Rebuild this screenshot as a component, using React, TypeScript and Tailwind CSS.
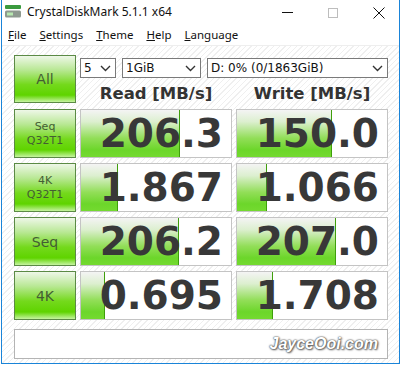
import React from "react";

const rows = [
  { l1: "Seq", l2: "Q32T1", r: "206.3", w: "150.0", rb: 100, wb: 96 },
  { l1: "4K", l2: "Q32T1", r: "1.867", w: "1.066", rb: 38, wb: 31 },
  { l1: "Seq", l2: "", r: "206.2", w: "207.0", rb: 99, wb: 100 },
  { l1: "4K", l2: "", r: "0.695", w: "1.708", rb: 25, wb: 37 },
];

function Chevron() {
  return (
    <svg width="11" height="7" viewBox="0 0 11 7" className="shrink-0">
      <path d="M1 1 L5.5 5.5 L10 1" fill="none" stroke="#333" strokeWidth="1.4" />
    </svg>
  );
}

function Select({ w, text }: { w: string; text: string }) {
  return (
    <div
      className={`${w} h-[20px] border border-[#7a7a7a] bg-white flex items-center justify-between pl-[3px] pr-[4px] text-[12px] text-[#111] [font-family:'DejaVu_Sans',sans-serif]`}
    >
      <span>{text}</span>
      <Chevron />
    </div>
  );
}

function Label({ l1, l2, h }: { l1: string; l2: string; h: string }) {
  return (
    <div
      className={`${h} border border-[#5b8a45] bg-[linear-gradient(180deg,#eef7e8_0%,#b9e895_30%,#74d91c_62%,#5fd400_85%,#c6f4a0_100%)] flex flex-col items-center justify-center text-[#435e33] [font-family:'DejaVu_Sans',sans-serif]`}
    >
      {l2 ? (
        <>
          <div className="text-[11px] leading-[14px]">{l1}</div>
          <div className="text-[11px] leading-[14px]">{l2}</div>
        </>
      ) : (
        <div className="text-[14px] leading-[16px]">{l1}</div>
      )}
    </div>
  );
}

function Value({ v, bar }: { v: string; bar: number }) {
  return (
    <div className="relative h-[49px] border border-[#c4c4c4] bg-white overflow-hidden">
      <div
        className="absolute left-0 top-0 bottom-0 border-r border-[#3f9e0c] bg-[linear-gradient(180deg,#f4f4f4_0%,#dcefcf_25%,#92de58_60%,#6cd62a_85%,#74da30_100%)]"
        style={{ width: bar - 1 }}
      />
      <div className="relative h-full flex items-center justify-end pr-[8px] text-[39px] font-bold leading-none text-[#383838] [font-family:'DejaVu_Sans',sans-serif]">
        {v}
      </div>
    </div>
  );
}

export default function App() {
  return (
    <div className="w-[402px] h-[367px] bg-white overflow-hidden">
      <div className="ml-[1px] w-[399px] h-[364px] border-l border-r border-b border-[#1a84d8] flex flex-col">
        {/* Title bar */}
        <div className="h-[24px] flex items-center relative [font-family:'Noto_Sans',sans-serif]">
          <svg width="17" height="13" viewBox="0 0 17 13" className="ml-[3px] mt-[-1px]">
            <rect x="0" y="0" width="16" height="4" rx="1" fill="#3a9a3e" />
            <rect x="0" y="5.5" width="16" height="7" rx="1.5" fill="#8e9a90" />
            <rect x="2" y="7.5" width="6" height="3" fill="#b7e8b0" />
          </svg>
          <span className="ml-[5px] text-[12px] text-[#111] leading-none">CrystalDiskMark 5.1.1 x64</span>
          <div className="absolute left-[280px] top-[12px] w-[11px] h-[1px] bg-[#111]" />
          <div className="absolute left-[326px] top-[8px] w-[10px] h-[10px] border border-[#bdbdbd]" />
          <svg width="12" height="12" viewBox="0 0 12 12" className="absolute left-[371px] top-[7px]">
            <path d="M0.5 0.5 L11.5 11.5 M11.5 0.5 L0.5 11.5" stroke="#111" strokeWidth="1" />
          </svg>
        </div>
        {/* Menu bar */}
        <div className="h-[21px] flex items-center text-[11.5px] text-[#111] [font-family:'Noto_Sans',sans-serif] pl-[6px] gap-[13px]">
          <span><span className="underline">F</span>ile</span>
          <span><span className="underline">S</span>ettings</span>
          <span><span className="underline">T</span>heme</span>
          <span><span className="underline">H</span>elp</span>
          <span><span className="underline">L</span>anguage</span>
        </div>
        <div className="h-[1px] bg-[#eeeeee]" />
        {/* Main */}
        <div className="flex-1 bg-[repeating-linear-gradient(135deg,#efefef_0px,#efefef_1px,#ffffff_1px,#ffffff_4px)] pl-[12px] pt-[9px]">
          <div className="grid grid-cols-[62px_152px_152px] gap-x-[4px] gap-y-[5px]">
            <Label l1="All" l2="" h="h-[48px]" />
            <div className="col-span-2 flex flex-col">
              <div className="flex gap-[6px] mt-[3px]">
                <Select w="w-[36px]" text="5" />
                <Select w="w-[79px]" text="1GiB" />
                <Select w="w-[181px]" text="D: 0% (0/1863GiB)" />
              </div>
              <div className="grid grid-cols-2 gap-x-[4px] mt-[6px] text-[16.5px] font-bold text-[#333] leading-[20px] [font-family:'DejaVu_Sans',sans-serif]">
                <div className="text-center">Read [MB/s]</div>
                <div className="text-center">Write [MB/s]</div>
              </div>
            </div>
            {rows.map((r, i) => (
              <React.Fragment key={i}>
                <Label l1={r.l1} l2={r.l2} h="h-[49px]" />
                <Value v={r.r} bar={r.rb} />
                <Value v={r.w} bar={r.wb} />
              </React.Fragment>
            ))}
          </div>
          <div className="mt-[9px] w-[374px] h-[30px] border border-[#b4b4b4] bg-white flex items-center justify-end pr-[9px]">
            <span className="text-[16px] font-bold italic text-white [font-family:'Liberation_Sans',sans-serif] [text-shadow:0_0_2px_#444,1px_1px_2px_#666,0_0_1px_#555]">
              JayceOoi.com
            </span>
          </div>
        </div>
      </div>
    </div>
  );
}
